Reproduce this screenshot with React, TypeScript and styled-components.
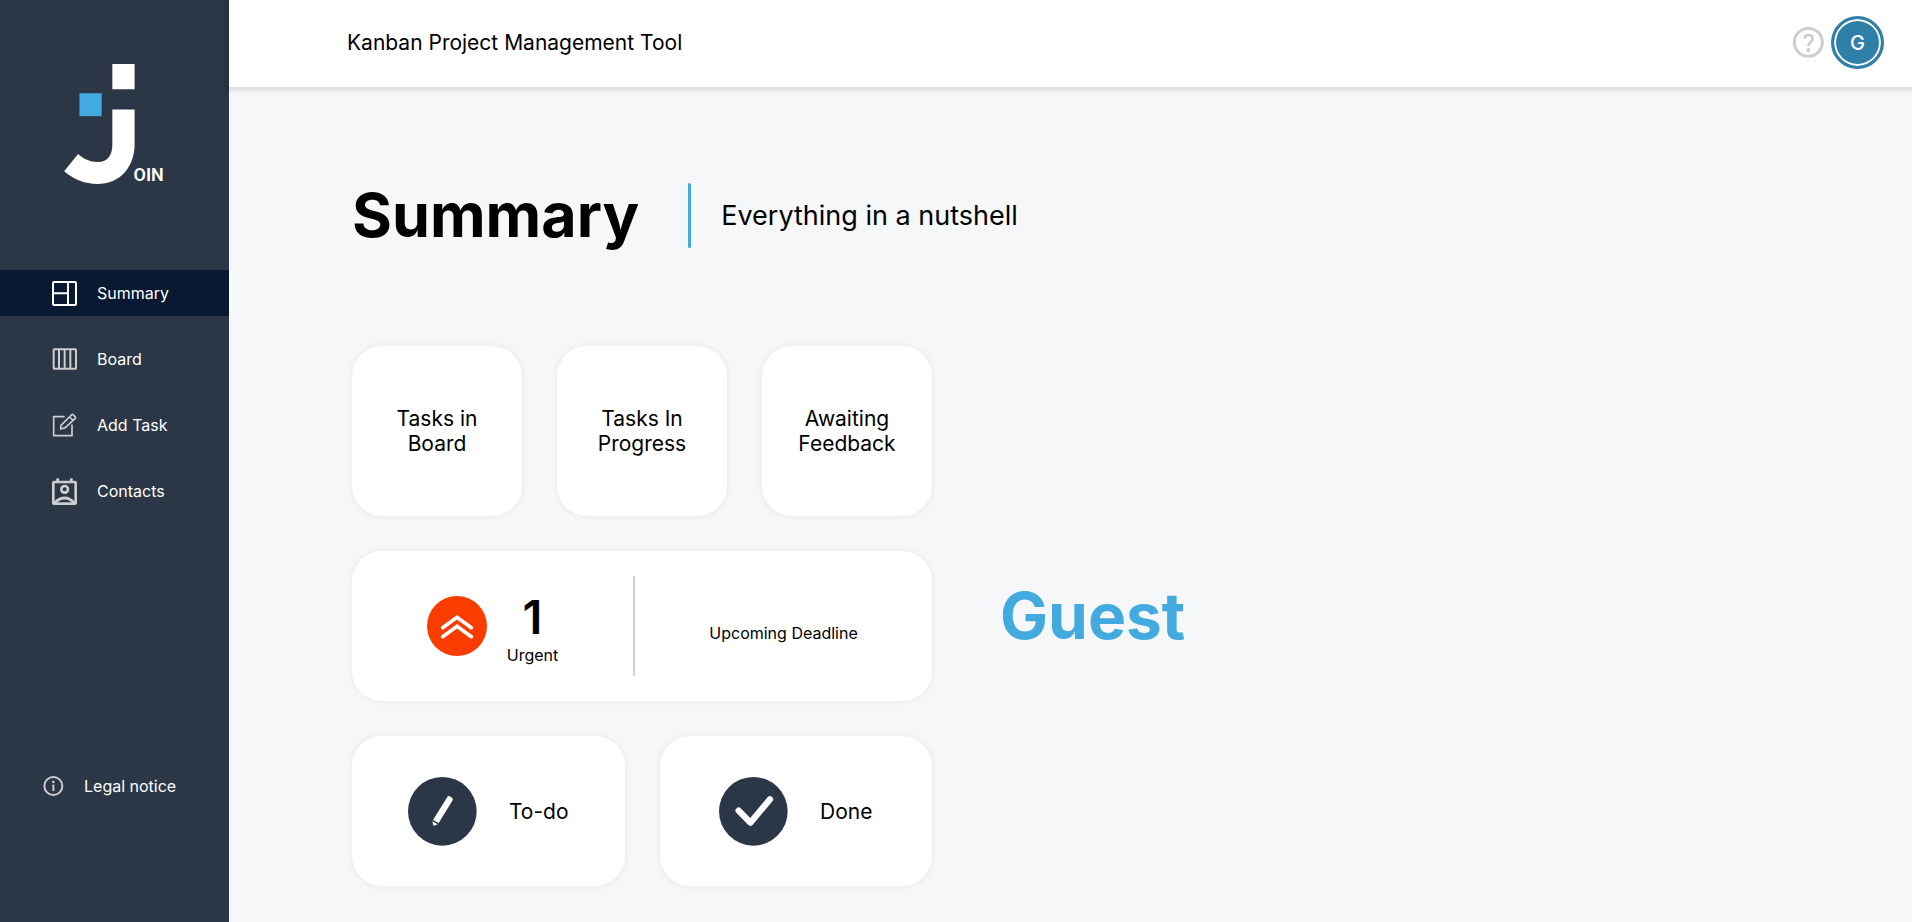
import React from "react";
import styled, { createGlobalStyle } from "styled-components";

const GlobalStyle = createGlobalStyle`
  *, *::before, *::after { box-sizing: border-box; }
  body {
    margin: 0;
    font-family: Inter, "Liberation Sans", sans-serif;
    font-size: 16px;
    color: #000000;
    background: #f6f7f8;
  }
  h1, h2, p { margin: 0; }
`;

const Page = styled.div`
  display: flex;
  min-height: 100vh;
`;

const Sidebar = styled.aside`
  flex: none;
  display: flex;
  flex-direction: column;
  width: 229px;
  padding: 64px 0 120px;
  background: #2b3647;
`;

const LogoLink = styled.a`
  display: block;
  width: 99px;
  height: 120px;
  margin: 0 64px 86px;
`;

const Nav = styled.nav`
  display: flex;
  flex-direction: column;
  gap: 20px;
`;

const NavLink = styled.a<{ $active?: boolean }>`
  display: flex;
  align-items: center;
  gap: 20px;
  height: 46px;
  padding-left: 52px;
  color: #ffffff;
  text-decoration: none;
  background: ${(p) => (p.$active ? "#091931" : "transparent")};
`;

const LegalLink = styled.a`
  display: flex;
  align-items: center;
  gap: 20px;
  margin-top: auto;
  padding-left: 43px;
  line-height: 32px;
  color: #ffffff;
  text-decoration: none;
`;

const Content = styled.div`
  flex: 1;
  min-width: 0;
`;

const Header = styled.header`
  display: flex;
  align-items: center;
  justify-content: space-between;
  height: 87px;
  padding: 0 28px 2px 118px;
  background: #ffffff;
  box-shadow: 0 0 4px 4px rgba(0, 0, 0, 0.1);
`;

const AppTitle = styled.p`
  font-size: 21px;
`;

const HeaderActions = styled.div`
  display: flex;
  align-items: center;
  gap: 7px;
`;

const HelpLink = styled.a`
  display: flex;
`;

const Avatar = styled.button`
  width: 53px;
  height: 53px;
  padding: 0;
  border: 3px solid #2f80a8;
  border-radius: 50%;
  background: #2f80a8;
  box-shadow: inset 0 0 0 2px #ffffff;
  color: #ffffff;
  font: 500 20px Inter, sans-serif;
  cursor: pointer;
`;

const Main = styled.main`
  padding: 96px 40px 36px 123px;
`;

const Heading = styled.div`
  display: flex;
  align-items: center;
  margin-bottom: 98px;
`;

const Title = styled.h1`
  font-size: 61px;
  line-height: 65px;
  font-weight: 700;
`;

const Subtitle = styled.p`
  padding-left: 30px;
  font-size: 27px;
`;

const AccentBar = styled.span`
  width: 3px;
  height: 65px;
  margin-left: 49px;
  border-radius: 2px;
  background: #42aadf;
`;

const Dashboard = styled.div`
  display: flex;
  align-items: center;
  gap: 68px;
`;

const Cards = styled.div`
  flex: none;
  display: flex;
  flex-direction: column;
  gap: 35px;
  width: 580px;
`;

const CardRow = styled.div`
  display: flex;
  gap: 35px;
`;

const Card = styled.button<{ $tall?: boolean }>`
  flex: 1;
  display: flex;
  align-items: center;
  justify-content: center;
  min-height: ${(p) => (p.$tall ? 170 : 150)}px;
  padding: 0;
  border: 0;
  border-radius: 30px;
  background: #ffffff;
  box-shadow: 0 0 4px 2px rgba(0, 0, 0, 0.04);
  color: inherit;
  font: 400 21px/25px Inter, sans-serif;
  cursor: pointer;
`;

const CardLabel = styled.span`
  width: 110px;
`;

const StatusContent = styled.span`
  display: flex;
  align-items: center;
  gap: 32px;
`;

const CardHalf = styled.span`
  flex: 1;
  display: flex;
  align-items: center;
  justify-content: center;
  gap: 20px;
  font-size: 16px;
`;

const Deadline = styled(CardHalf)`
  padding: 14px 8px 0;
`;

const UrgentCount = styled.span`
  display: flex;
  flex-direction: column;
  align-items: center;
  line-height: 20px;
`;

const Count = styled.strong`
  font-size: 47px;
  line-height: 57px;
  font-weight: 600;
`;

const Divider = styled.span`
  width: 2px;
  height: 100px;
  background: #d1d1d1;
`;

const UserName = styled.h2`
  font-size: 64px;
  line-height: 76px;
  font-weight: 700;
  color: #42aadf;
`;

const Logo = () => (
  <svg width="99" height="120" viewBox="192 71 297 361" overflow="visible" aria-hidden="true">
    <path fill="#fff" d="M337 71h67v76h-67z" />
    <path fill="#42aadf" d="M238 159h67v69h-67z" />
    <path
      fill="#fff"
      d="M337 208H404V312C404 382 360 432 292 432C255 432 222 420 192 394L234 342C250 357 270 366 293 366C325 366 337 345 337 312Z"
    />
    <text x="401" y="422" fill="#fff" fontFamily="Roboto, sans-serif" fontSize="54" fontWeight="600">
      OIN
    </text>
  </svg>
);

const SummaryIcon = () => (
  <svg width="25" height="25" viewBox="0 0 75 75" fill="none" stroke="#fff" strokeWidth="6" aria-hidden="true">
    <rect x="3" y="3" width="69" height="69" rx="3" />
    <path d="M48 3V72M3 37H48" />
  </svg>
);

const BoardIcon = () => (
  <svg width="25" height="22" viewBox="0 0 75 66" fill="none" stroke="#cdcdcd" strokeWidth="6" aria-hidden="true">
    <rect x="5" y="4" width="67" height="58" rx="2" />
    <path d="M21 4V62M38 4V62M55 4V62" />
  </svg>
);

const AddTaskIcon = () => (
  <svg width="25" height="24" viewBox="0 0 75 72" fill="none" stroke="#cdcdcd" strokeWidth="5" strokeLinejoin="round" strokeLinecap="round" aria-hidden="true">
    <path d="M36 11H5V68H60V36" />
    <path d="M27 37L58 6Q61 3 64 6L69 11Q72 14 69 17L40 44L26 48ZM53 12L63 22" />
  </svg>
);

const ContactsIcon = () => (
  <svg width="25" height="27" viewBox="0 0 75 81" fill="none" stroke="#cdcdcd" strokeWidth="8" aria-hidden="true">
    <rect x="4" y="12" width="67" height="65" rx="2" />
    <path d="M17 1V14M58 1V14" />
    <circle cx="38" cy="34" r="10" />
    <path d="M8 74Q38 46 67 74" />
  </svg>
);

const InfoIcon = () => (
  <svg width="21" height="20" viewBox="0 0 63 60" fill="none" aria-hidden="true">
    <circle cx="31" cy="30" r="27" stroke="#cdcdcd" strokeWidth="6" />
    <path d="M31 26V45" stroke="#cdcdcd" strokeWidth="6" />
    <circle cx="31" cy="18" r="4" fill="#cdcdcd" />
  </svg>
);

const HelpIcon = () => (
  <svg width="31" height="31" viewBox="0 0 93 93" fill="none" stroke="#cdcdcd" aria-hidden="true">
    <circle cx="46" cy="46" r="42" strokeWidth="9" />
    <path d="M34 35C36 20 59 21 59 35C59 45 46 46 46 58" strokeWidth="8" />
    <circle cx="46" cy="69" r="6" fill="#cdcdcd" stroke="none" />
  </svg>
);

const UrgentIcon = () => (
  <svg width="60" height="60" viewBox="0 0 180 180" aria-hidden="true">
    <circle cx="90" cy="90" r="90" fill="#fb3c00" />
    <path d="M47 95L90 64L133 95M47 122L90 91L133 122" fill="none" stroke="#fff" strokeWidth="11" strokeLinecap="round" />
  </svg>
);

const TodoIcon = () => (
  <svg width="69" height="69" viewBox="0 0 207 207" aria-hidden="true">
    <circle cx="103" cy="103" r="103" fill="#2b3647" />
    <path fill="#fff" d="M118 60Q120 56 125 58L132 62Q136 65 134 70L92 138L75 129ZM73 133L89 142L79 146Q75 146 75 142Z" />
  </svg>
);

const DoneIcon = () => (
  <svg width="69" height="69" viewBox="0 0 207 207" aria-hidden="true">
    <circle cx="103" cy="103" r="103" fill="#2b3647" />
    <path d="M59 101L94 137L153 67" fill="none" stroke="#fff" strokeWidth="19" strokeLinecap="round" strokeLinejoin="round" />
  </svg>
);

const navItems = [
  { label: "Summary", Icon: SummaryIcon, active: true },
  { label: "Board", Icon: BoardIcon },
  { label: "Add Task", Icon: AddTaskIcon },
  { label: "Contacts", Icon: ContactsIcon },
];

const totals = ["Tasks in Board", "Tasks In Progress", "Awaiting Feedback"];

const statuses = [
  { label: "To-do", Icon: TodoIcon },
  { label: "Done", Icon: DoneIcon },
];

export default function App() {
  return (
    <>
      <GlobalStyle />
      <Page>
        <Sidebar>
          <LogoLink href="#" aria-label="Join">
            <Logo />
          </LogoLink>
          <Nav>
            {navItems.map(({ label, Icon, active }) => (
              <NavLink key={label} href="#" $active={active} aria-current={active ? "page" : undefined}>
                <Icon />
                {label}
              </NavLink>
            ))}
          </Nav>
          <LegalLink href="#">
            <InfoIcon />
            Legal notice
          </LegalLink>
        </Sidebar>
        <Content>
          <Header>
            <AppTitle>Kanban Project Management Tool</AppTitle>
            <HeaderActions>
              <HelpLink href="#" aria-label="Help">
                <HelpIcon />
              </HelpLink>
              <Avatar type="button">G</Avatar>
            </HeaderActions>
          </Header>
          <Main>
            <Heading>
              <Title>Summary</Title>
              <AccentBar />
              <Subtitle>Everything in a nutshell</Subtitle>
            </Heading>
            <Dashboard>
              <Cards>
                <CardRow>
                  {totals.map((label) => (
                    <Card key={label} type="button" $tall>
                      <CardLabel>{label}</CardLabel>
                    </Card>
                  ))}
                </CardRow>
                <Card type="button">
                  <CardHalf>
                    <UrgentIcon />
                    <UrgentCount>
                      <Count>1</Count>
                      Urgent
                    </UrgentCount>
                  </CardHalf>
                  <Divider />
                  <Deadline>Upcoming Deadline</Deadline>
                </Card>
                <CardRow>
                  {statuses.map(({ label, Icon }) => (
                    <Card key={label} type="button">
                      <StatusContent>
                        <Icon />
                        {label}
                      </StatusContent>
                    </Card>
                  ))}
                </CardRow>
              </Cards>
              <UserName>Guest</UserName>
            </Dashboard>
          </Main>
        </Content>
      </Page>
    </>
  );
}
